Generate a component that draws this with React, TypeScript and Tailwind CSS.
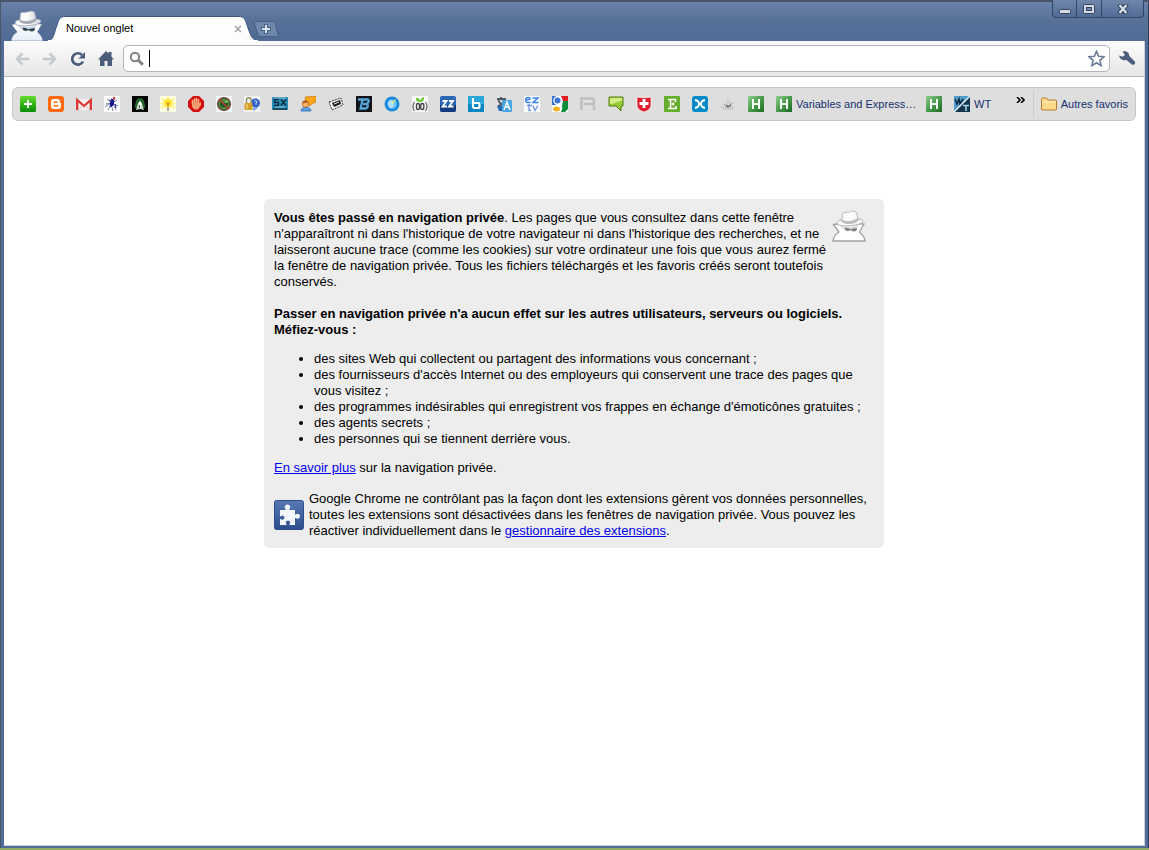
import React from "react";

type IconProps = { children: React.ReactNode };

function Favicon({ children }: IconProps) {
  return (
    <svg viewBox="0 0 16 16" className="block size-4 shrink-0" aria-hidden="true">
      {children}
    </svg>
  );
}

function HIcon({ id }: { id: string }) {
  return (
    <Favicon>
      <defs>
        <linearGradient id={id} x1="0" y1="0" x2="1" y2="1">
          <stop offset="0" stopColor="#8fcf8f" />
          <stop offset=".5" stopColor="#4a9a4e" />
          <stop offset="1" stopColor="#1a6a22" />
        </linearGradient>
      </defs>
      <rect width="16" height="16" fill={`url(#${id})`} />
      <path d="M5 3v10M11 3v10M5 8h6" stroke="#f2fff2" strokeWidth="2" fill="none" />
    </Favicon>
  );
}

function Spy({ gray = false }: { gray?: boolean }) {
  const id = gray ? "spyGray" : "spyBlue";
  return (
    <svg viewBox="0 0 34 32" className="block h-8 w-[34px]" aria-hidden="true">
      <defs>
        <linearGradient id={id} x1="0" y1="0" x2="0" y2="1">
          <stop offset="0" stopColor="#ffffff" />
          <stop offset="1" stopColor={gray ? "#ffffff" : "#e6eefa"} />
        </linearGradient>
        <linearGradient id={id + "h"} x1="0" y1="0" x2="1" y2="0">
          <stop offset="0" stopColor="#f6f6f6" />
          <stop offset=".4" stopColor="#ffffff" />
          <stop offset="1" stopColor={gray ? "#f2f2f2" : "#d5d8dd"} />
        </linearGradient>
      </defs>
      <path
        d="M1 31c.5-4 2.500-7 6-9L1.500 14.500l7-1h16l7.500.5-4.500 8c3 2.500 5 5 5.500 9z"
        fill={`url(#${id})`}
        stroke={gray ? "#a0a0a0" : "#4a648f"}
        strokeWidth={gray ? "1.300" : ".5"}
      />
      <path d="M7 14c4 4 15 4 20 0l-2 4c-5 2-11 2-15 0z" fill={gray ? "#dcdcdc" : "#cdd7e6"} />
      <path d="M12.500 18c2-.5 4 .2 5.500 1.200 2-.2 5-1.300 7-.7.700 2.500-3.500 4-5.500 2l-1.500-.3c-2 1.500-5.500.5-5.500-2.200z" fill={gray ? "#808080" : "#33464f"} />
      <path d="M9.500 10C7 10 5 11.300 5 13c0 2 4 3 10 2.800C23 15.600 31 14 31 11.300c0-1.500-2-2.300-5-2.300z" fill={`url(#${id}h)`} stroke={gray ? "#999" : "#8b96a8"} strokeWidth=".7" />
      <path d="M9.800 11.500L10.500 4c0-1.500 2-1.800 4-1.500 3 .2 4-1.500 7-1.300 2.500 0 3 1 3.500 3l1.200 6c-3 3.500-12 4-16.400 1.300z" fill={`url(#${id}h)`} stroke={gray ? "#999" : "#b5b9c0"} strokeWidth=".6" />
      <path d="M9.800 9.500c4 2.500 12 2 15.900-1.500l.5 2.500c-3 4-12.400 4.500-16.400 1.500z" fill={gray ? "#bdbdbd" : "#a7abb2"} />
    </svg>
  );
}

const favicons: { label: string; art: React.ReactNode }[] = [
  {
    label: "Ajouter",
    art: (
      <Favicon>
        <defs>
          <linearGradient id="plus" x1="0" y1="0" x2="0" y2="1">
            <stop offset="0" stopColor="#62dc2c" />
            <stop offset="1" stopColor="#078d06" />
          </linearGradient>
        </defs>
        <rect width="16" height="16" rx="1.500" fill="url(#plus)" />
        <path d="M8 4v8M4 8h8" stroke="#fff" strokeWidth="2" />
      </Favicon>
    ),
  },
  {
    label: "Blogger",
    art: (
      <Favicon>
        <rect width="16" height="16" rx="3" fill="#ff6b0a" />
        <path d="M6 3h3a3 3 0 0 1 3 3c0 1 .2 1 1 1v3a3 3 0 0 1-3 3H6a3 3 0 0 1-3-3V6a3 3 0 0 1 3-3z" fill="#fff" />
        <path d="M6 6.300h3M6 9.700h4" stroke="#ff6b0a" strokeWidth="1.400" strokeLinecap="round" />
      </Favicon>
    ),
  },
  {
    label: "Gmail",
    art: (
      <Favicon>
        <path d="M0 3h16v11H0z" fill="#f6eded" />
        <path d="M1.200 14V4L8 10l6.800-6v10" fill="none" stroke="#d93636" strokeWidth="2.300" />
        <path d="M3 13.500L6.500 9M13 13.500L9.500 9" stroke="#e2b9b9" strokeWidth=".8" />
      </Favicon>
    ),
  },
  {
    label: "Insecte",
    art: (
      <Favicon>
        <rect width="16" height="16" fill="#fff" />
        <path d="M3 3l5 4 5-3M2 8l6-1 6 3M4 14l3-6 2 7M12 14L9 8M1 11l4-3M7 2l1 5M11 1l-2 5" stroke="#7a7aa8" strokeWidth="1" fill="none" />
        <path d="M8 3l2 2-1 4-2 2-1-3zM5 4l2 1M11 8l1 4" fill="#16168a" stroke="#16168a" />
        <path d="M9 1l2 1-1 2z" fill="#d11" stroke="#c22" strokeWidth=".6" />
      </Favicon>
    ),
  },
  {
    label: "Pingouin",
    art: (
      <Favicon>
        <rect width="16" height="16" fill="#030603" />
        <path d="M3 12C3 5 5 2 8 2s5 3 5 10z" fill="#27662a" />
        <path d="M4 14c1-3 2-8 4-9 2 1 3 6 4 9l-4-1z" fill="#c9d9c9" />
        <path d="M8 5l1.500 3L8 13 6.500 8z" fill="#fff" />
        <path d="M7.500 9v3" stroke="#325c34" />
      </Favicon>
    ),
  },
  {
    label: "Astuces",
    art: (
      <Favicon>
        <rect width="16" height="16" fill="#fffce0" />
        <path d="M8 1v13M2 3l12 9M14 3L2 12M1 7.500h14" stroke="#fff17a" strokeWidth="1.800" />
        <circle cx="8" cy="7" r="4" fill="#ffe332" />
        <path d="M6.500 6L8 9l1.500-3M8 8v4" stroke="#c49427" fill="none" />
        <path d="M7 12h2v3H7z" fill="#a6a6a6" />
      </Favicon>
    ),
  },
  {
    label: "Stop",
    art: (
      <Favicon>
        <path d="M5 0h6l5 5v6l-5 5H5l-5-5V5z" fill="#d40f0f" />
        <path d="M4.500 8V4.500M6.500 8V3M8.500 8V2.500M10.500 8V3.500" stroke="#f4b183" strokeWidth="1.600" strokeLinecap="round" />
        <path d="M4 7h7.500l1.500-1v3l-3 4.500H6.500L4 11z" fill="#ef9d6e" />
      </Favicon>
    ),
  },
  {
    label: "Bloqueur",
    art: (
      <Favicon>
        <rect width="16" height="16" fill="#f5f5f5" />
        <circle cx="8" cy="8" r="6.300" fill="#418c40" stroke="#704136" strokeWidth="1.500" />
        <path d="M4 7h8l-1 4H5z" fill="#205b25" />
        <path d="M3.500 3.500l9 9" stroke="#c22c29" strokeWidth="1.600" />
        <path d="M9 6l3-1" stroke="#b9dc8b" />
      </Favicon>
    ),
  },
  {
    label: "Sécurité",
    art: (
      <Favicon>
        <rect width="16" height="16" fill="#f2f2f2" />
        <circle cx="11.500" cy="7" r="4.500" fill="#3264c8" />
        <path d="M10.500 5.500c1-2 3.500 0 1.500 2v1" stroke="#fff" fill="none" />
        <path d="M9 12l4-1 1 1-5 3z" fill="#799ce8" />
        <path d="M2.500 8V4a2.300 2.300 0 0 1 4.600 0v4" fill="none" stroke="#999169" strokeWidth="1.500" />
        <rect x=".5" y="7" width="8" height="7" rx="1" fill="#d29f2b" />
        <path d="M3 8v5" stroke="#ffe19a" />
      </Favicon>
    ),
  },
  {
    label: "SX",
    art: (
      <Favicon>
        <rect y="1" width="16" height="13" rx="1" fill="#268ab3" />
        <path d="M1 12h14v2H1z" fill="#1e485e" />
        <path d="M7 3.500H2.500v3h4v3H2M9 3.500l5 6M14 3.500l-5 6" stroke="#082b3e" strokeWidth="1.300" fill="none" />
        <path d="M2 2h12M3 11h10" stroke="#a5dced" strokeWidth=".8" />
      </Favicon>
    ),
  },
  {
    label: "Forum",
    art: (
      <Favicon>
        <path d="M5 1l11-1v6l-4 2-3 2V7L6 6z" fill="#f9a51b" stroke="#c27115" strokeWidth=".6" />
        <path d="M1 15c0-5 10-5 10 0z" fill="#5ea0e0" stroke="#266ab4" strokeWidth=".8" />
        <circle cx="5.500" cy="8" r="3.200" fill="#f6b56b" stroke="#c26d20" strokeWidth=".8" />
        <path d="M2.300 7.500c0-4 5-4 6.200-1z" fill="#b2631c" />
      </Favicon>
    ),
  },
  {
    label: "Photos",
    art: (
      <Favicon>
        <path d="M1 6l12-4 2 7-11 5z" fill="#f4f4f4" stroke="#333" strokeWidth="1" strokeDasharray="2 1" />
        <path d="M4 7l8-3 1 4-7 3z" fill="#1f1f1f" />
        <path d="M6 8l5-2" stroke="#eee" />
      </Favicon>
    ),
  },
  {
    label: "B",
    art: (
      <Favicon>
        <rect width="16" height="16" fill="#111419" />
        <path d="M2 3.500h9.500c2 0 1.500 4-1.500 4.500 3 0 2 4.500-1 4.500H4.500L6.500 4M7 8h3" fill="none" stroke="#57a4d6" strokeWidth="2.300" />
      </Favicon>
    ),
  },
  {
    label: "Boussole",
    art: (
      <Favicon>
        <circle cx="8" cy="8" r="7.500" fill="#1788db" />
        <circle cx="8" cy="8" r="4.800" fill="#6cc3f5" />
        <path d="M4 7l3-3 3 3-1 4-3 1z" fill="#b4e3ff" />
        <path d="M12.500 3L9 7.500 7.500 6z" fill="#f7e35b" />
      </Favicon>
    ),
  },
  {
    label: "Graines",
    art: (
      <Favicon>
        <rect width="16" height="16" fill="#f6f6f6" />
        <path d="M2.500 6C.5 9 .5 12 2.500 15M13.500 6c2 3 2 6 0 9" fill="none" stroke="#666" strokeWidth="1.200" />
        <rect x="4.500" y="7.500" width="3" height="6" rx="1.500" fill="none" stroke="#444" strokeWidth="1.400" />
        <rect x="8.800" y="7.500" width="3" height="6" rx="1.500" fill="none" stroke="#444" strokeWidth="1.400" />
        <path d="M8 6C4 6 4 3 4 2c3 0 4 1 4 4 0-3 2-4 4-5 0 3-1 5-4 5z" fill="#64c523" />
      </Favicon>
    ),
  },
  {
    label: "ZZ",
    art: (
      <Favicon>
        <rect width="16" height="16" rx="2" fill="#2c66b6" />
        <path d="M0 9h16v5a2 2 0 0 1-2 2H2a2 2 0 0 1-2-2z" fill="#143c7e" />
        <path d="M2.500 5h4l-4 5.500h4.500M9 5h4l-4 5.500h4.500" stroke="#fff" strokeWidth="1.800" fill="none" />
      </Favicon>
    ),
  },
  {
    label: "b",
    art: (
      <Favicon>
        <rect width="16" height="16" fill="#0a86c1" />
        <rect width="16" height="8" fill="#29a7db" />
        <path d="M5 2v10M5 7h5a1.500 1.500 0 0 1 1.500 1.500v2A1.500 1.500 0 0 1 10 12H5" fill="none" stroke="#fff" strokeWidth="2.200" />
      </Favicon>
    ),
  },
  {
    label: "Traduction",
    art: (
      <Favicon>
        <path d="M1 3h9M5 1v2M2.500 4c1 4 3 5 6 6M8 4c-1 4-3 5-6 6" fill="none" stroke="#4c5861" strokeWidth="1.800" />
        <path d="M1 10h6v5H3z" fill="#2769b8" />
        <rect x="6" y="4" width="10" height="12" rx="1" fill="#4ba4e4" />
        <path d="M8 14l3-8 3 8M9 11h4" stroke="#fff" strokeWidth="1.400" fill="none" />
      </Favicon>
    ),
  },
  {
    label: "EZTV",
    art: (
      <Favicon>
        <rect width="16" height="16" fill="#fcfdff" />
        <path d="M6.500 6.500H3.500C1 6.500 1 1.500 4 1.500S7 4 2 4M8.500 2H14L9 6.500h5.500" fill="none" stroke="#3e86ea" strokeWidth="1.500" />
        <path d="M5 8v6.500h2M3 9.500h5M9 9.500l2 5 3-5" fill="none" stroke="#6d94e2" strokeWidth="1.300" />
      </Favicon>
    ),
  },
  {
    label: "Google",
    art: (
      <Favicon>
        <rect width="16" height="16" fill="#fff" />
        <path d="M9 0h7v5h-5z" fill="#e61c23" />
        <path d="M11 5h5v8l-3 3H9z" fill="#0b8c3d" />
        <path d="M0 0h4v9H0z" fill="#3a73d1" />
        <circle cx="5.500" cy="4.500" r="4.200" fill="#fff" />
        <circle cx="5.500" cy="4.500" r="3" fill="#3a73d1" />
        <path d="M8 8c3 2 3 6 0 8H4l5-4z" fill="#fff" />
        <ellipse cx="4.500" cy="13" rx="3.500" ry="2.500" fill="#f4b219" />
      </Favicon>
    ),
  },
  {
    label: "R",
    art: (
      <Favicon>
        <path d="M1.500 14V2.500h11c2 0 2 5.500 0 5.500H4M14 14V9" fill="none" stroke="#bebebe" strokeWidth="2.500" />
      </Favicon>
    ),
  },
  {
    label: "Messages",
    art: (
      <Favicon>
        <path d="M1 1h14v9h-2v5l-5-5H1z" fill="#99ca35" stroke="#547d12" />
        <path d="M2 2h12v3C9 5 7 8 2 8z" fill="#d4ed87" />
      </Favicon>
    ),
  },
  {
    label: "Croix",
    art: (
      <Favicon>
        <path d="M1 1c5 1 9 1 14 0v8c0 4-4 6-7 7-3-1-7-3-7-7z" fill="#df1d2d" stroke="#fff" strokeWidth=".7" />
        <path d="M8 3v9M3.500 7.500h9" stroke="#fff" strokeWidth="3" />
      </Favicon>
    ),
  },
  {
    label: "E",
    art: (
      <Favicon>
        <rect width="16" height="16" rx="1" fill="#64ae2d" />
        <path d="M4 3.500h7.500V6M4 12.500h8V10M6.500 3.500v9M6.500 8H10M9.500 6.500v3" fill="none" stroke="#fff" strokeWidth="1.500" />
      </Favicon>
    ),
  },
  {
    label: "Papillon",
    art: (
      <Favicon>
        <rect width="16" height="16" rx="3" fill="#078bc9" />
        <path d="M3 4c3 .5 4 2 4 4s-1.500 3.500-4 4M13 4c-3 .5-4 2-4 4s1.500 3.500 4 4M7 8h2" fill="none" stroke="#fff" strokeWidth="2" />
      </Favicon>
    ),
  },
  {
    label: "Anonyme",
    art: (
      <Favicon>
        <path d="M5 6l3-4 2 3 1 2-3 2z" fill="#cfcfcf" />
        <path d="M3 8l5 2 5-3" fill="none" stroke="#b4b4b4" strokeWidth="1.300" />
        <path d="M6 9l2 2 3-2" fill="none" stroke="#666" strokeWidth="1.500" />
        <path d="M1 11h14M3 13h10" stroke="#999" strokeDasharray="1 1.300" />
      </Favicon>
    ),
  },
  { label: "H", art: <HIcon id="h1" /> },
];

function TitleBar() {
  return (
    <header className="flex h-[41px] items-end bg-linear-to-b from-[#6b83a9] via-[#587199] to-[#506b95] pl-[9px] shadow-[inset_0_2px_0_#48556b]">
      <div className="h-[31px] overflow-hidden">
        <Spy />
      </div>
      <div className="relative ml-1 h-[25px] w-[210px]">
        <svg viewBox="0 0 210 25" preserveAspectRatio="none" className="absolute inset-0 size-full" aria-hidden="true">
          <path d="M0 25C6 24 6 17 9 9c2-6 3-8.500 8-8.500h174c5 0 6 2.500 8 8.500 3 8 4 15 11 16z" fill="#fdfdfd" stroke="#3f577e" />
          <path d="M0 25h210" stroke="#fdfdfd" strokeWidth="2" />
        </svg>
        <div className="relative flex h-full items-center justify-between pr-[14px] pl-[18px] text-[11px] text-black">
          <span>Nouvel onglet</span>
          <button type="button" aria-label="Fermer l'onglet" className="flex size-3 items-center justify-center">
            <svg viewBox="0 0 8 8" className="size-2">
              <path d="M1 1l6 6M7 1L1 7" stroke="#a3a3a3" strokeWidth="1.500" />
            </svg>
          </button>
        </div>
      </div>
      <button type="button" aria-label="Nouvel onglet" className="-ml-[5px] mb-1 h-4 w-[26px]">
        <svg viewBox="0 0 26 16" className="block h-4 w-[26px]">
          <path d="M2.500.5h17c2 0 2.500 1 3 3l2.500 10c.3 1.500 0 2-1.500 2H8c-2 0-2.500-1-3-2.500L1.500 3C1 1.500 1 .5 2.500.5z" fill="#7188ad" stroke="#46608a" />
          <path d="M13 3v10M8 8h10" stroke="#48618a" strokeWidth="4" />
          <path d="M13 4v8M9 8h8" stroke="#dbe3ef" strokeWidth="2" />
        </svg>
      </button>
      <div className="mr-1 ml-auto flex h-[18px] self-start rounded-b border border-t-0 border-[#324766] bg-linear-to-b from-[#7086ab] to-[#526c96]">
        <button type="button" aria-label="Réduire" className="flex w-6 items-center justify-center border-r border-[#324766]">
          <svg viewBox="0 0 12 12" className="size-3">
            <rect x=".5" y="6.500" width="11" height="4" rx="1" fill="#d5dce7" stroke="#33435f" />
          </svg>
        </button>
        <button type="button" aria-label="Agrandir" className="flex w-[25px] items-center justify-center border-r border-[#324766]">
          <svg viewBox="0 0 12 10" className="h-[10px] w-3">
            <rect x=".5" y=".5" width="11" height="9" rx="1" fill="#d5dce7" stroke="#33435f" />
            <rect x="3.500" y="3.500" width="5" height="3" fill="#7087ab" stroke="#33435f" />
          </svg>
        </button>
        <button type="button" aria-label="Fermer" className="flex w-[41px] items-center justify-center">
          <svg viewBox="0 0 12 10" className="h-[10px] w-3">
            <path d="M2 0l8 10M10 0L2 10" stroke="#33435f" strokeWidth="4.500" />
            <path d="M2.500 1l7 8M9.500 1l-7 8" stroke="#d5dce7" strokeWidth="2.400" />
          </svg>
        </button>
      </div>
    </header>
  );
}

function Toolbar() {
  return (
    <div className="flex h-9 items-center border-b border-[#b5b8bd] bg-linear-to-b from-[#fcfcfc] to-[#e6e6e6] pr-2 pl-[10px]">
      <div className="flex items-center gap-3">
        <button type="button" aria-label="Précédent">
          <svg viewBox="0 0 16 16" className="block size-4">
            <path d="M15 8H3M8.500 2.500L3 8l5.500 5.500" fill="none" stroke="#c7cad1" strokeWidth="2.600" />
          </svg>
        </button>
        <button type="button" aria-label="Suivant">
          <svg viewBox="0 0 16 16" className="block size-4">
            <path d="M1 8h12M7.500 2.500L13 8l-5.500 5.500" fill="none" stroke="#c7cad1" strokeWidth="2.600" />
          </svg>
        </button>
        <button type="button" aria-label="Actualiser">
          <svg viewBox="0 0 16 16" className="block size-4">
            <path d="M13 10.500A5.700 5.700 0 1 1 12 4" fill="none" stroke="#4c5d7c" strokeWidth="2.700" />
            <path d="M15 1v6.500H8.500z" fill="#4c5d7c" />
          </svg>
        </button>
        <button type="button" aria-label="Accueil">
          <svg viewBox="0 0 16 16" className="block size-4">
            <path d="M8 0l2.500 2.500V1h3v4.500L16 8.500h-2V15H9.500v-5h-3v5H2V8.500H0z" fill="#4c5d7c" />
          </svg>
        </button>
      </div>
      <label className="ml-[9px] flex h-[27px] min-w-0 flex-1 items-center rounded-[5px] border border-[#b4b5b8] bg-white pr-1 pl-[5px]">
        <svg viewBox="0 0 16 16" className="block size-4 shrink-0" aria-hidden="true">
          <circle cx="6" cy="6" r="4.200" fill="none" stroke="#808080" strokeWidth="2" />
          <path d="M9.300 9.300l4.500 4.500" stroke="#808080" strokeWidth="3" />
        </svg>
        <span className="ml-1 h-[17px] w-px bg-black" />
        <input type="text" aria-label="Adresse" className="h-5 min-w-0 flex-1 bg-transparent px-1 text-sm outline-none" />
        <button type="button" aria-label="Ajouter aux favoris">
          <svg viewBox="0 0 17 17" className="block size-[17px]">
            <path d="M8.500 1.300l2.100 5 5.300.5-4 3.500 1.200 5.300-4.600-2.800-4.600 2.800 1.200-5.300-4-3.500 5.300-.5z" fill="#fff" stroke="#6c7c98" strokeWidth="1.600" />
          </svg>
        </button>
      </label>
      <button type="button" aria-label="Outils" className="ml-2">
        <svg viewBox="0 0 18 17" className="block h-[17px] w-[18px]">
          <path d="M4.500 1.500c3.500-1.200 6.800.8 6.800 4.500l5.200 5.200c2 2-1 4.800-3 3L8.500 10C5 11 1.500 9 1 5.500l3.500 1.200L7 5z" fill="#4c5d7c" />
        </svg>
      </button>
    </div>
  );
}

function BookmarksBar() {
  return (
    <nav aria-label="Favoris" className="mx-2 mt-[10px] flex h-[34px] items-center rounded-md border border-[#c6c6c6] bg-[#dedede] px-[7px] text-[11px] text-[#15306e]">
      <div className="flex min-w-0 flex-1 items-center gap-3">
        {favicons.map((f, i) => (
          <a key={i} href="#" aria-label={f.label} className="shrink-0">
            {f.art}
          </a>
        ))}
        <a href="#" className="flex shrink-0 items-center gap-1 whitespace-nowrap">
          <HIcon id="h2" />
          <span className="w-[118px]">Variables and Express…</span>
        </a>
        <a href="#" aria-label="H" className="shrink-0">
          <HIcon id="h3" />
        </a>
        <a href="#" className="flex shrink-0 items-center gap-1">
          <Favicon>
            <rect width="16" height="16" fill="#13364f" />
            <path d="M0 0h16L0 16z" fill="#4f9ccb" />
            <path d="M1 3l2 5 2-5 1 5 3-5" fill="none" stroke="#09263e" strokeWidth="1.500" />
            <path d="M16 0L0 16" stroke="#eaf4fa" strokeWidth="1.300" />
            <path d="M9 9.500h6M12 10v5" stroke="#acd5e7" strokeWidth="1.500" />
          </Favicon>
          <span>WT</span>
        </a>
      </div>
      <button type="button" aria-label="Autres" className="mr-2 mb-2">
        <svg viewBox="0 0 9 6" className="block h-[6px] w-[9px]">
          <path d="M1 0l3 3-3 3M5 0l3 3-3 3" fill="none" stroke="#000" strokeWidth="1.600" />
        </svg>
      </button>
      <a href="#" className="flex h-7 shrink-0 items-center gap-1 border-l border-[#c9cfd6] pl-[7px] whitespace-nowrap">
        <svg viewBox="0 0 16 16" className="block size-4" aria-hidden="true">
          <path d="M.5 13V3.500c0-1 .5-1.500 1.500-1.500h3.500L7 4h7.500c.7 0 1 .4 1 1v8c0 .7-.3 1-1 1h-13c-.7 0-1-.3-1-1z" fill="#fcd888" stroke="#b37a2f" />
          <path d="M1.500 6h13" stroke="#fff0c4" />
        </svg>
        <span>Autres favoris</span>
      </a>
    </nav>
  );
}

function IncognitoCard() {
  return (
    <main className="mx-auto mt-[78px] w-[620px] max-w-full rounded-[5px] bg-[#ededed] px-[10px] pt-[11px] pb-[9px] text-[13px] leading-4 text-black">
      <div className="float-right mr-2 ml-2">
        <Spy gray />
      </div>
      <p className="whitespace-nowrap">
        <b>Vous êtes passé en navigation privée</b>. Les pages que vous consultez dans cette fenêtre
        <br />
        n'apparaîtront ni dans l'historique de votre navigateur ni dans l'historique des recherches, et ne
        <br />
        laisseront aucune trace (comme les cookies) sur votre ordinateur une fois que vous aurez fermé
        <br />
        la fenêtre de navigation privée. Tous les fichiers téléchargés et les favoris créés seront toutefois
        <br />
        conservés.
      </p>
      <p className="mt-4 font-bold whitespace-nowrap">
        Passer en navigation privée n'a aucun effet sur les autres utilisateurs, serveurs ou logiciels.
        <br />
        Méfiez-vous :
      </p>
      <ul className="mt-[13px] list-disc pl-10">
        <li>des sites Web qui collectent ou partagent des informations vous concernant ;</li>
        <li>
          des fournisseurs d'accès Internet ou des employeurs qui conservent une trace des pages que
          <br />
          vous visitez ;
        </li>
        <li>des programmes indésirables qui enregistrent vos frappes en échange d'émoticônes gratuites ;</li>
        <li>des agents secrets ;</li>
        <li>des personnes qui se tiennent derrière vous.</li>
      </ul>
      <p className="mt-[13px]">
        <a href="#" className="text-[#0000ee] underline">En savoir plus</a> sur la navigation privée.
      </p>
      <div className="mt-[15px] flex items-center gap-[5px]">
        <svg viewBox="0 0 30 30" className="block size-[30px] shrink-0" aria-hidden="true">
          <defs>
            <linearGradient id="puzzle" x1="0" y1="0" x2="0" y2="1">
              <stop offset="0" stopColor="#5679b4" />
              <stop offset="1" stopColor="#2c4c8c" />
            </linearGradient>
          </defs>
          <rect x=".5" y=".5" width="29" height="29" rx="2" fill="url(#puzzle)" stroke="#2e4b86" />
          <path d="M6 10h5.500c.5-1-.8-1.500-.8-3 0-3.500 5.500-3.500 5.500 0 0 1.500-1.200 2-.8 3H21v4.500c1 .5 1.500-.8 2.500-.8 3.300 0 3.300 5 0 5-1 0-1.500-1.200-2.500-.7V25h-5.500c-.5-1 .7-1.300.7-2.500 0-2.500-4.400-2.500-4.400 0 0 1.200 1.200 1.500.7 2.500H6v-6c1-.5 1.500.7 2.500.7 2.500 0 2.500-4.200 0-4.200-1 0-1.500 1.200-2.500.7z" fill="#f3f6fb" />
        </svg>
        <p className="whitespace-nowrap">
          Google Chrome ne contrôlant pas la façon dont les extensions gèrent vos données personnelles,
          <br />
          toutes les extensions sont désactivées dans les fenêtres de navigation privée. Vous pouvez les
          <br />
          réactiver individuellement dans le{" "}
          <a href="#" className="text-[#0000ee] underline">gestionnaire des extensions</a>.
        </p>
      </div>
    </main>
  );
}

export default function App() {
  return (
    <div className="flex min-h-screen flex-col border-b-2 border-[#8fac62] bg-[#48556b] pl-px font-['Liberation_Sans',Arial,sans-serif]">
      <div className="flex flex-1 flex-col rounded-t-md border-r border-[#2f3c52] bg-[#506b95]">
        <TitleBar />
        <div className="mr-[3px] mb-[2px] ml-[3px] flex flex-1 flex-col border-r border-b border-[#ccd2da] bg-white">
          <Toolbar />
          <BookmarksBar />
          <IncognitoCard />
        </div>
      </div>
    </div>
  );
}
